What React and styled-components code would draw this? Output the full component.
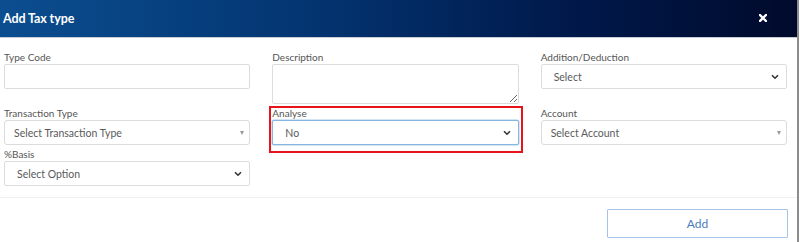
import React from "react";
import styled, { createGlobalStyle } from "styled-components";

const Global = createGlobalStyle`
  html, body { margin: 0; padding: 0; background: #fff; }
  body { font-family: Lato, "Open Sans", sans-serif; }
  * { box-sizing: border-box; }
`;

const Page = styled.div`
  width: 800px;
  height: 242px;
  overflow: hidden;
  background: #fff;
`;

const Modal = styled.div`
  width: 799px;
  height: 242px;
  border-right: 2px solid #8c8c8c;
  display: flex;
  flex-direction: column;
`;

const Header = styled.div`
  height: 38px;
  flex: none;
  display: flex;
  align-items: center;
  justify-content: space-between;
  padding: 0 30px 0 3px;
  background: linear-gradient(to right, #0b4e90 0%, #033470 40%, #001a4c 70%, #000a2c 100%);
  border-bottom: 1px solid #c8ccd4;
`;

const Title = styled.h4`
  margin: 0;
  color: #fff;
  font-family: Lato, sans-serif;
  font-weight: 700;
  font-size: 12.5px;
  letter-spacing: -0.1px;
`;

const Close = styled.button`
  border: 0;
  background: none;
  padding: 0;
  width: 8px;
  height: 8px;
  display: flex;
  cursor: pointer;
  margin-top: -2px;
`;

const Body = styled.div`
  display: grid;
  grid-template-columns: repeat(3, 1fr);
  column-gap: 22px;
  row-gap: 3px;
  padding: 13px 10px 0 4px;
  align-items: start;
`;

const Group = styled.div`
  position: relative;
  display: flex;
  flex-direction: column;
  ${(p) =>
    p.$highlight &&
    `
    &::after {
      content: "";
      position: absolute;
      left: -3px;
      right: -4px;
      top: -1px;
      bottom: -8px;
      border: 2px solid #e8141b;
      pointer-events: none;
    }
  `}
`;

const Label = styled.label`
  font-size: 10px;
  line-height: 13px;
  color: #555;
  height: 13px;
`;

const Input = styled.input`
  height: 25px;
  border: 1px solid #dcdcdc;
  border-radius: 2px;
  font: inherit;
  padding: 0 9px;
  outline: none;
`;

const TextArea = styled.textarea`
  height: 40px;
  border: 1px solid #dcdcdc;
  border-radius: 2px;
  font: inherit;
  padding: 4px 9px;
  outline: none;
  resize: vertical;
`;

const chevron = `url("data:image/svg+xml,%3Csvg xmlns='http://www.w3.org/2000/svg' width='8' height='6' viewBox='0 0 8 6'%3E%3Cpath d='M1 1.2 4 4.2 7 1.2' fill='none' stroke='%23333' stroke-width='1.6'/%3E%3C/svg%3E")`;

const Select = styled.select`
  appearance: none;
  -webkit-appearance: none;
  height: 25px;
  border: 1px solid ${(p) => (p.$focused ? "#86b6dd" : "#dcdcdc")};
  box-shadow: ${(p) => (p.$focused ? "0 0 0 0.5px #a9cbe8" : "none")};
  border-radius: 2px;
  font-family: Lato, sans-serif;
  font-size: 10.5px;
  color: #5a5a5a;
  padding: 0 20px 0 12px;
  background: #fff ${chevron} no-repeat right 7px center;
  outline: none;
`;

const FakeSelect = styled.div`
  position: relative;
  height: 25px;
  border: 1px solid #dcdcdc;
  border-radius: 3px;
  font-size: 10.5px;
  color: #5a5a5a;
  display: flex;
  align-items: center;
  padding: 0 20px 0 9px;
  background: #fff;
`;

const Caret = styled.span`
  position: absolute;
  right: 5px;
  top: 50%;
  margin-top: -2px;
  width: 0;
  height: 0;
  border-left: 2.5px solid transparent;
  border-right: 2.5px solid transparent;
  border-top: 4px solid #999;
`;

const Footer = styled.div`
  margin-top: auto;
  border-top: 1px solid #f0f0f0;
  display: flex;
  justify-content: flex-end;
  padding: 11px 9px 4px 0;
`;

const AddButton = styled.button`
  width: 181px;
  height: 29px;
  background: #fff;
  border: 1.5px solid #a5c4e4;
  border-radius: 1px;
  color: #4a7dbd;
  font-family: Lato, sans-serif;
  font-size: 12px;
  cursor: pointer;
`;

export default function App() {
  return (
    <Page>
      <Global />
      <Modal>
        <Header>
          <Title>Add Tax type</Title>
          <Close aria-label="close">
            <svg width="8" height="8" viewBox="0 0 8 8">
              <path d="M1 1 7 7M7 1 1 7" stroke="#fff" strokeWidth="2.4" strokeLinecap="square" />
            </svg>
          </Close>
        </Header>
        <Body>
          <Group>
            <Label>Type Code</Label>
            <Input />
          </Group>
          <Group>
            <Label>Description</Label>
            <TextArea />
          </Group>
          <Group>
            <Label>Addition/Deduction</Label>
            <Select defaultValue="">
              <option value="">Select</option>
            </Select>
          </Group>
          <Group>
            <Label>Transaction Type</Label>
            <FakeSelect>
              Select Transaction Type
              <Caret />
            </FakeSelect>
          </Group>
          <Group $highlight>
            <Label>Analyse</Label>
            <Select $focused defaultValue="no">
              <option value="no">No</option>
            </Select>
          </Group>
          <Group>
            <Label>Account</Label>
            <FakeSelect>
              Select Account
              <Caret />
            </FakeSelect>
          </Group>
          <Group>
            <Label>%Basis</Label>
            <Select defaultValue="">
              <option value="">Select Option</option>
            </Select>
          </Group>
        </Body>
        <Footer>
          <AddButton>Add</AddButton>
        </Footer>
      </Modal>
    </Page>
  );
}
